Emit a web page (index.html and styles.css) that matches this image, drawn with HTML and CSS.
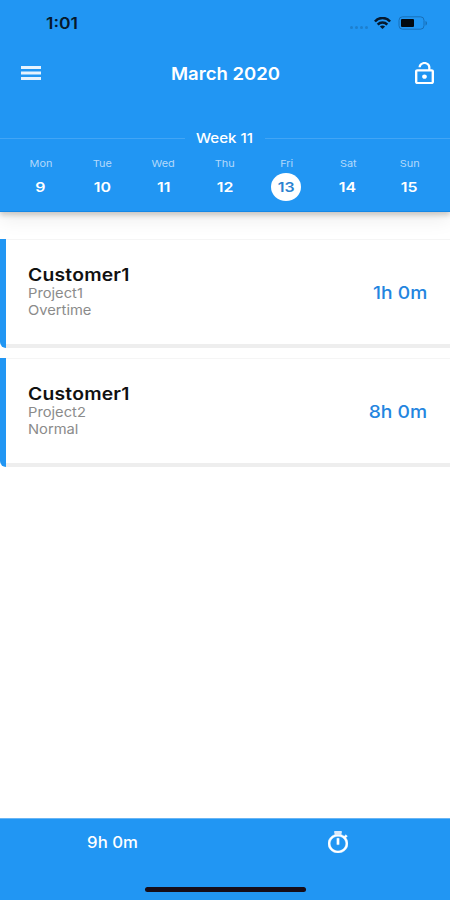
FILE: index.html
```html
<!DOCTYPE html>
<html lang="en">
<head>
<meta charset="utf-8">
<title>Time sheet</title>
<link rel="stylesheet" href="styles.css">
</head>
<body>
<div class="app">
  <header class="header">
    <div class="status">
      <span class="clock">1:01</span>
      <span class="signal"><i></i><i></i><i></i><i></i></span>
      <svg class="wifi" viewBox="0 0 17 12" preserveAspectRatio="none"><g fill="none" stroke="#06192d" stroke-width="2.5"><path d="M.9 4.500C5-.2 12-.2 16.100 4.500"/><path d="M3.700 7.600c2.600-2.800 7-2.800 9.600 0"/></g><path fill="#06192d" d="M5.900 9.600c1.500-1.400 3.700-1.400 5.200 0L8.500 12z"/></svg>
      <svg class="battery" viewBox="0 0 30 14"><rect x="1" y=".8" width="25" height="12.400" rx="3.500" fill="none" stroke="#176fb8"/><rect x="3" y="3" width="13" height="8" rx="1" fill="#020910"/><path d="M27.500 5v4.500c2-.7 2-3.800 0-4.500z" fill="#176fb8"/></svg>
    </div>
    <div class="bar">
      <svg class="menu" viewBox="3 6 18 12" preserveAspectRatio="none"><path fill="#e6f3fe" d="M3 18h18v-2.600H3V18zm0-4.700h18v-2.600H3v2.600zM3 6v2.600h18V6H3z"/></svg>
      <h1 class="month">March 2020</h1>
      <svg class="lock" viewBox="4 1 16 21" preserveAspectRatio="none"><path fill="#fff" d="M12 17c1.100 0 2-.9 2-2s-.9-2-2-2-2 .9-2 2 .9 2 2 2zm6-9h-1V6c0-2.760-2.240-5-5-5S7 3.240 7 6h1.900c0-1.710 1.390-3.100 3.100-3.100 1.710 0 3.100 1.390 3.100 3.100v2H6c-1.100 0-2 .9-2 2v10c0 1.100.9 2 2 2h12c1.100 0 2-.9 2-2V10c0-1.100-.9-2-2-2zm0 12H6V10h12v10z"/></svg>
    </div>
    <div class="week"><span class="week-label">Week 11</span></div>
    <div class="days">
      <div class="day"><span class="name">Mon</span><span class="num"><b>9</b></span></div>
      <div class="day"><span class="name">Tue</span><span class="num"><b>10</b></span></div>
      <div class="day"><span class="name">Wed</span><span class="num"><b>11</b></span></div>
      <div class="day"><span class="name">Thu</span><span class="num"><b>12</b></span></div>
      <div class="day"><span class="name">Fri</span><span class="num selected"><b>13</b></span></div>
      <div class="day"><span class="name">Sat</span><span class="num"><b>14</b></span></div>
      <div class="day"><span class="name">Sun</span><span class="num"><b>15</b></span></div>
    </div>
  </header>
  <main class="entries">
    <article class="entry">
      <div class="info">
        <h2 class="customer">Customer1</h2>
        <span class="detail">Project1</span>
        <span class="detail">Overtime</span>
      </div>
      <span class="hours">1h 0m</span>
    </article>
    <article class="entry">
      <div class="info">
        <h2 class="customer">Customer1</h2>
        <span class="detail">Project2</span>
        <span class="detail">Normal</span>
      </div>
      <span class="hours">8h 0m</span>
    </article>
  </main>
  <footer class="footer">
    <div class="actions">
      <span class="total">9h 0m</span>
      <svg class="timer" viewBox="3 1 18 21" preserveAspectRatio="none"><path fill="#fff" stroke="#fff" stroke-width=".4" d="M15 1.200H9v2h6v-2zM11 14h2V8h-2v6zm8.030-6.610l1.420-1.420c-.43-.51-.9-.99-1.410-1.410l-1.420 1.420C16.070 4.740 14.120 4 12 4c-4.970 0-9 4.030-9 9s4.020 9 9 9 9-4.030 9-9c0-2.120-.74-4.070-1.970-5.610zM12 20c-3.870 0-7-3.130-7-7s3.130-7 7-7 7 3.130 7 7-3.130 7-7 7z"/><path fill="#dbeafb" d="M9 1h6v4H9z"/></svg>
    </div>
    <div class="home"></div>
  </footer>
</div>
</body>
</html>
```
FILE: styles.css
```css
* { box-sizing: border-box; }
body { margin: 0; font-family: Inter, "Liberation Sans", sans-serif; background: #fff; }
svg { display: block; flex: none; }
.app { width: 450px; height: 900px; display: flex; flex-direction: column; overflow: hidden; }

.header { height: 212px; flex: none; background: #2196f3; color: #fff; border-bottom: 1px solid #1488e6; box-shadow: 0 3px 5px rgba(70, 60, 40, .24), 0 8px 18px rgba(0, 0, 0, .07); }
.status { height: 46px; display: flex; align-items: center; padding: 0 22px 0 46px; }
.clock { margin-right: auto; color: #06192d; font-size: 15.500px; font-weight: 600; transform: scaleX(1.13); transform-origin: left; }
.signal { display: flex; gap: 2px; margin: 8px 6px 0 0; }
.signal i { width: 3px; height: 3px; border-radius: 50%; background: #1d7fce; }
.wifi { width: 17px; height: 12px; margin-right: 7px; }
.battery { width: 30px; height: 14px; }

.bar { height: 54px; display: grid; grid-template-columns: 20px 1fr 20px; align-items: center; padding: 0 15px 0 21px; }
.menu { width: 20px; height: 14px; }
.month { margin: 2px 5px 0 0; text-align: center; font-size: 17.500px; line-height: 24px; font-weight: 600; transform: scaleX(1.06); }
.lock { width: 19px; height: 22px; margin-bottom: 1px; }

.week { height: 20px; margin-top: 28px; display: flex; align-items: center; gap: 14px; }
.week::before, .week::after { content: ""; flex: 1; height: 1px; background: #42a5f5; }
.week-label { font-size: 13.500px; line-height: 20px; font-weight: 500; transform: scaleX(1.12); }
.days { display: grid; grid-template-columns: repeat(7, 61.400px); justify-content: center; padding-top: 9px; }
.day { display: flex; flex-direction: column; align-items: center; }
.name { font-size: 9.500px; line-height: 14px; color: #b3d9fb; transform: scaleX(1.15); }
.num { width: 30px; height: 28px; margin-top: 2px; padding-bottom: 1px; display: flex; align-items: center; justify-content: center; font-size: 13.500px; }
.num b { font-weight: 600; transform: scaleX(1.18); }
.selected { border-radius: 50%; background: #fff; color: #2a82d0; }

.entries { flex: 1; display: flex; flex-direction: column; gap: 10px; padding-top: 27px; }
.entry { height: 109px; border-left: 6px solid #2196f3; border-radius: 0 0 0 6px; display: flex; align-items: center; justify-content: space-between; padding: 0 23px 3px 22px; background: #fff linear-gradient(#f5f5f5, #f5f5f5) 0 0 / 100% 1px no-repeat; box-shadow: inset 0 -4px #eee; }
.info { display: flex; flex-direction: column; }
.customer { margin: 0; color: #111; font-size: 17px; line-height: 20px; font-weight: 600; letter-spacing: .2px; transform: scaleX(1.135); transform-origin: left; }
.detail { color: #8b8b8b; font-size: 13.500px; line-height: 17.300px; transform: scaleX(1.09); transform-origin: left; }
.hours { color: #2485df; font-size: 17.500px; font-weight: 500; transform: scaleX(1.1); transform-origin: right; }

.footer { height: 82px; flex: none; display: flex; flex-direction: column; align-items: center; background: #2196f3; border-top: 1px solid #68b5f5; color: #fff; }
.actions { width: 100%; height: 46px; display: grid; grid-template-columns: 1fr 1fr; align-items: center; justify-items: center; }
.total { font-size: 15.500px; font-weight: 500; transform: scaleX(1.08); }
.timer { width: 20px; height: 22px; }
.home { width: 161px; height: 5px; margin-top: 22px; border-radius: 3px; background: #160d18; }
```
